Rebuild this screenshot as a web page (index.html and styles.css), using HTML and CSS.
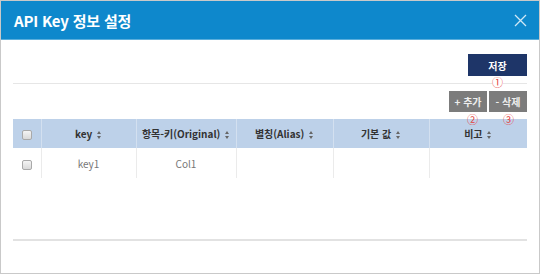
FILE: index.html
```html
<!DOCTYPE html>
<html lang="ko">
<head>
  <meta charset="UTF-8">
  <title>API Key 정보 설정</title>
  <link rel="stylesheet" href="styles.css">
</head>
<body>
  <div class="modal">
    <div class="modal-head">
      <h1>API Key 정보 설정</h1>
      <svg class="close" width="13" height="13" viewBox="0 0 13 13">
        <path d="M1 1 L12 12 M12 1 L1 12" stroke="#cfe8f6" stroke-width="1.3" fill="none"/>
      </svg>
    </div>

    <div class="modal-body">
      <div class="top-bar">
        <button class="btn btn-save">저장</button>
        <span class="mark mark-1">①</span>
      </div>

      <div class="grid-tools">
        <button class="btn btn-gray">+ 추가</button>
        <button class="btn btn-gray">- 삭제</button>
        <span class="mark mark-2">②</span>
        <span class="mark mark-3">③</span>
      </div>

      <table class="grid">
        <colgroup>
          <col style="width:28px">
          <col style="width:95px">
          <col style="width:100px">
          <col style="width:97px">
          <col style="width:96px">
          <col>
        </colgroup>
        <thead>
          <tr>
            <th><span class="chk"></span></th>
            <th>key <i class="sort"></i></th>
            <th>항목-키(Original) <i class="sort"></i></th>
            <th>별칭(Alias) <i class="sort"></i></th>
            <th>기본 값 <i class="sort"></i></th>
            <th>비고 <i class="sort"></i></th>
          </tr>
        </thead>
        <tbody>
          <tr>
            <td><span class="chk"></span></td>
            <td>key1</td>
            <td>Col1</td>
            <td></td>
            <td></td>
            <td></td>
          </tr>
        </tbody>
      </table>

      <div class="bottom-line"></div>
    </div>
  </div>
</body>
</html>
```

FILE: styles.css
```css
body {
  margin: 0;
  font-family: "Noto Sans CJK KR", "Noto Sans", sans-serif;
  background: #fff;
}

.modal {
  width: 540px;
  height: 274px;
  box-sizing: border-box;
  border: 1px solid #c9c9c9;
  background: #fff;
}

.modal-head {
  height: 38px;
  background: #0e88cc;
  border-bottom: 1px solid #5aaedc;
  display: flex;
  align-items: center;
  justify-content: space-between;
  padding: 0 12px 0 13px;
}

.modal-head h1 {
  margin: 0;
  color: #fff;
  font-size: 15px;
  font-weight: 700;
  letter-spacing: -0.2px;
}

.modal-body {
  padding: 0 12px;
}

.top-bar {
  position: relative;
  display: flex;
  justify-content: flex-end;
  padding: 14px 0 7px;
  border-bottom: 1px solid #e6e6e6;
}

.btn {
  border: none;
  color: #fff;
  font-family: inherit;
  font-size: 10px;
  font-weight: 700;
  cursor: pointer;
  padding: 0;
}

.btn-save {
  width: 59px;
  height: 22px;
  background: #1e3568;
}

.grid-tools {
  position: relative;
  display: flex;
  justify-content: flex-end;
  gap: 2px;
  padding: 7px 0;
}

.btn-gray {
  width: 38px;
  height: 21px;
  background: #7c7c7c;
  color: #eee;
}

.mark {
  position: absolute;
  color: #e5403c;
  font-size: 11px;
  line-height: 1;
  font-family: "Noto Sans CJK KR", sans-serif;
  background: #fff;
}

.mark-1 { right: 24px; top: 37px; }
.mark-2 { right: 49px; top: 30px; background: none; }
.mark-3 { right: 13px; top: 30px; background: none; }

.grid {
  width: 100%;
  border-collapse: collapse;
  table-layout: fixed;
  font-size: 10px;
}

.grid th {
  height: 29px;
  background: #bdd1e9;
  color: #333;
  font-weight: 700;
  border-left: 1px solid #d3e0f0;
  text-align: center;
  padding: 0;
}

.grid th:first-child,
.grid td:first-child {
  border-left: none;
}

.grid td {
  height: 30px;
  color: #777;
  text-align: center;
  border-left: 1px solid #ebebeb;
  padding: 0;
}

.chk {
  display: inline-block;
  width: 8px;
  height: 8px;
  border: 1px solid #a9a9a9;
  border-radius: 2px;
  background: linear-gradient(#f4f4f4, #d9d9d9);
  vertical-align: middle;
}

.sort {
  position: relative;
  display: inline-block;
  width: 5px;
  height: 8px;
  margin-left: 2px;
  vertical-align: -1px;
}

.sort::before,
.sort::after {
  content: "";
  position: absolute;
  left: 0;
  border-left: 2.5px solid transparent;
  border-right: 2.5px solid transparent;
}

.sort::before {
  top: 0;
  border-bottom: 3px solid #666;
}

.sort::after {
  bottom: 0;
  border-top: 3px solid #666;
}

.bottom-line {
  margin-top: 61px;
  border-top: 2px solid #e2e2e2;
}
```
